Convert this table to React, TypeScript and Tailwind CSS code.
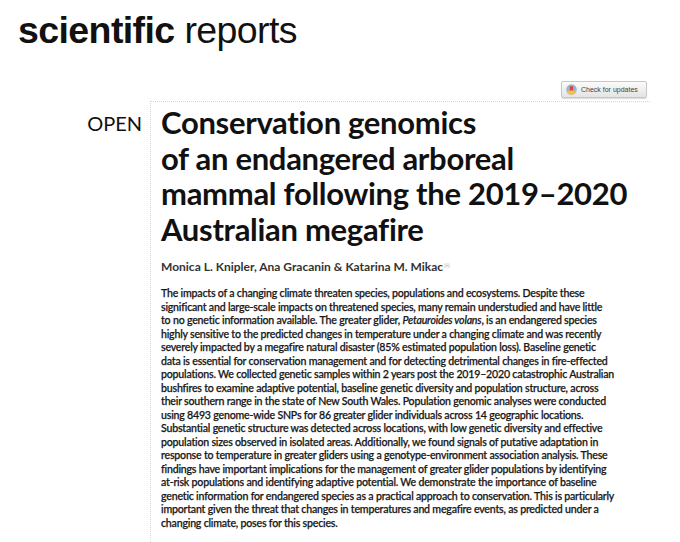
import React from 'react';

const bodyLines: React.ReactNode[] = [
    'The impacts of a changing climate threaten species, populations and ecosystems. Despite these',
    'significant and large-scale impacts on threatened species, many remain understudied and have little',
    <>to no genetic information available. The greater glider, <i>Petauroides volans</i>, is an endangered species</>,
    'highly sensitive to the predicted changes in temperature under a changing climate and was recently',
    'severely impacted by a megafire natural disaster (85% estimated population loss). Baseline genetic',
    'data is essential for conservation management and for detecting detrimental changes in fire-effected',
    'populations. We collected genetic samples within 2 years post the 2019–2020 catastrophic Australian',
    'bushfires to examine adaptive potential, baseline genetic diversity and population structure, across',
    'their southern range in the state of New South Wales. Population genomic analyses were conducted',
    'using 8493 genome-wide SNPs for 86 greater glider individuals across 14 geographic locations.',
    'Substantial genetic structure was detected across locations, with low genetic diversity and effective',
    'population sizes observed in isolated areas. Additionally, we found signals of putative adaptation in',
    'response to temperature in greater gliders using a genotype-environment association analysis. These',
    'findings have important implications for the management of greater glider populations by identifying',
    'at-risk populations and identifying adaptive potential. We demonstrate the importance of baseline',
    'genetic information for endangered species as a practical approach to conservation. This is particularly',
    'important given the threat that changes in temperatures and megafire events, as predicted under a',
    'changing climate, poses for this species.',
];

const titleLines = [
    'Conservation genomics',
    'of an endangered arboreal',
    'mammal following the 2019–2020',
    'Australian megafire',
];

const CheckForUpdates: React.FC = () => (
    <div className="flex items-center gap-[4px] h-[17px] w-[86px] pl-[4px] rounded-[2px] border border-[#c8c8c8] bg-gradient-to-b from-[#fbfbfb] to-[#e4e4e4] shadow-[0_1px_1px_rgba(0,0,0,0.15)]">
        <svg width="11" height="11" viewBox="0 0 20 20">
            <circle cx="10" cy="10" r="9.5" fill="#8fb8d8" />
            <path d="M2.5 12 A7.5 7.5 0 0 0 17.5 12 Z" fill="#f2c14e" />
            <path d="M7 4 h6 v9 l-3 -2.5 l-3 2.5 Z" fill="#e0413b" />
        </svg>
        <span className="text-[7px] text-[#444] leading-none" style={{ fontFamily: '"Liberation Sans", Arial, sans-serif' }}>
            Check for updates
        </span>
    </div>
);

export default function App() {
    return (
        <div className="w-[680px] h-[542px] bg-white overflow-hidden text-[#1a1a1a]" style={{ fontFamily: 'Lato, "Open Sans", sans-serif' }}>
            {/* Journal logo */}
            <div className="pl-[18px] pt-[10px] h-[52px] text-[37.5px] leading-[40px] tracking-[-0.6px] text-[#111]" style={{ fontFamily: '"Liberation Sans", Arial, sans-serif' }}>
                <span className="font-bold">scientific</span> <span className="font-normal">reports</span>
            </div>

            {/* Crossmark */}
            <div className="flex justify-end pr-[33px] pt-[29px] h-[49px]">
                <CheckForUpdates />
            </div>

            {/* Article */}
            <div className="flex">
                <div className="w-[150px] shrink-0 flex justify-end pr-[8px] pt-[10px]">
                    <span className="text-[20px] leading-[24px] font-normal text-[#111]">OPEN</span>
                </div>
                <div className="w-[500px] border-l border-t border-dotted border-[#d8d8d8] pl-[10px] pt-[3px] pb-[40px]">
                    <h1 className="text-[31px] leading-[35.5px] font-bold text-[#111] tracking-[-0.3px]">
                        {titleLines.map((l, i) => (
                            <div key={i} className="whitespace-nowrap">{l}</div>
                        ))}
                    </h1>
                    <div className="mt-[12px] text-[12px] leading-[16px] font-bold text-[#333] whitespace-nowrap">
                        Monica L. Knipler, Ana Gracanin &amp; Katarina M. Mikac
                        <sup className="text-[7px] text-[#bbb] font-normal ml-[1px]">✉</sup>
                    </div>
                    <div className="mt-[12px] text-[10.6px] leading-[13.5px] font-medium text-[#111] tracking-[-0.2px] [-webkit-text-stroke:0.25px_#222]">
                        {bodyLines.map((l, i) => (
                            <div key={i} className="whitespace-nowrap">{l}</div>
                        ))}
                    </div>
                </div>
            </div>
        </div>
    );
}
